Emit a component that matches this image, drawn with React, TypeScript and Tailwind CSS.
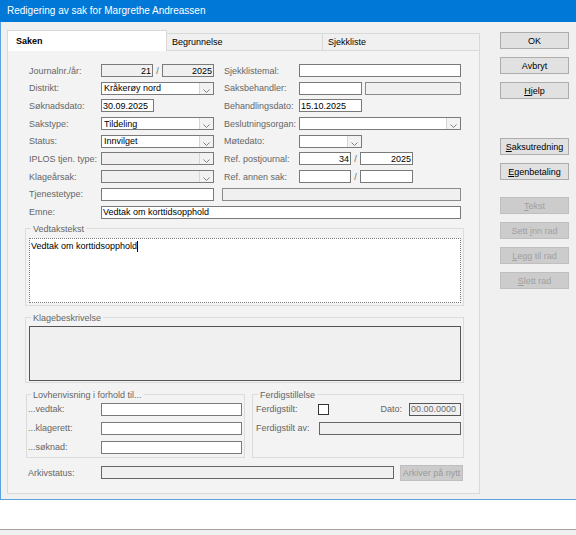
import React from 'react'

type Kind = 'white' | 'readonly' | 'disabled'

function Label({ children, className = '' }: { children: React.ReactNode; className?: string }) {
  return <span className={`text-[#666] whitespace-nowrap shrink-0 ${className}`}>{children}</span>
}

function TextBox({
  value = '',
  className = '',
  kind = 'white',
  right = false,
  muted = false,
}: {
  value?: string
  className?: string
  kind?: Kind
  right?: boolean
  muted?: boolean
}) {
  const look =
    kind === 'white'
      ? 'bg-white border-[#7a7a7a]'
      : kind === 'readonly'
        ? 'bg-[#f0f0f0] border-[#7a7a7a]'
        : 'bg-[#f0f0f0] border-[#8a8a8a]'
  return (
    <div
      className={`h-[13px] shrink-0 border ${look} flex items-center px-[1px] overflow-hidden whitespace-nowrap ${right ? 'justify-end' : ''} ${muted ? 'text-[#6d6d6d]' : 'text-black'} ${className}`}
    >
      {value}
    </div>
  )
}

function Combo({ value = '', className = '', disabled = false }: { value?: string; className?: string; disabled?: boolean }) {
  return (
    <div className={`h-[13px] shrink-0 border border-[#7a7a7a] flex ${disabled ? 'bg-[#f0f0f0]' : 'bg-white'} ${className}`}>
      <span className="flex-1 flex items-center pl-[2px] text-black whitespace-nowrap overflow-hidden">{value}</span>
      <span className="w-[14px] border-l border-[#d6d6d6] bg-[#f2f2f2] flex items-end justify-center pb-[1px]">
        <svg width="7" height="4" viewBox="0 0 7 4">
          <path d="M0.5 0.5L3.5 3.5L6.5 0.5" fill="none" stroke="#808080" strokeWidth="1" />
        </svg>
      </span>
    </div>
  )
}

function Slash() {
  return <span className="w-[9px] shrink-0 text-center text-[#666]">/</span>
}

function SideButton({ children, disabled = false }: { children: React.ReactNode; disabled?: boolean }) {
  return (
    <div
      className={`h-[17px] w-[69px] border flex items-center justify-center whitespace-nowrap ${
        disabled ? 'bg-[#cccccc] border-[#bfbfbf] text-[#a0a0a0]' : 'bg-[#e1e1e1] border-[#adadad] text-black'
      }`}
    >
      <span>{children}</span>
    </div>
  )
}

export default function App() {
  return (
    <div className="w-[576px] h-[535px] overflow-hidden flex flex-col bg-[#f0f0f0] font-['Liberation_Sans',Arial,sans-serif] text-[9px] leading-[10px]">
      <div className="h-[22px] shrink-0 bg-[#0078d7] text-white text-[10px] flex items-center pl-[7px]">
        Redigering av sak for Margrethe Andreassen
      </div>

      <div className="h-[477px] shrink-0 border-l border-[#5aa2e0] flex">
        {/* tab control */}
        <div className="ml-[6px] mt-[8px] w-[473px] flex flex-col">
          <div className="h-[20px] flex items-end">
            <div className="relative z-10 -mb-px h-[21px] w-[160px] bg-white border border-b-0 border-[#d9d9d9] flex items-center pl-[8px] font-bold text-black">
              Saken
            </div>
            <div className="h-[17px] w-[156px] border border-l-0 border-b-0 border-[#d9d9d9] bg-[#f0f0f0] flex items-center pl-[5px] text-black">
              Begrunnelse
            </div>
            <div className="h-[17px] w-[157px] border border-l-0 border-b-0 border-[#d9d9d9] bg-[#f0f0f0] flex items-center pl-[5px] text-black">
              Sjekkliste
            </div>
          </div>

          <div className="h-[444px] border border-[#d9d9d9] bg-[#f3f3f3] pt-[13px] pl-[17px] flex flex-col">
            {/* field rows */}
            <div className="pl-[4px] flex flex-col gap-[4.7px]">
              <div className="h-[13px] flex items-center">
                <div className="w-[185px] flex items-center">
                  <Label className="w-[72px]">Journalnr./år:</Label>
                  <TextBox kind="readonly" right value="21" className="w-[52px]" />
                  <Slash />
                  <TextBox kind="readonly" right value="2025" className="w-[52px]" />
                </div>
                <div className="ml-[10px] flex items-center">
                  <Label className="w-[75px]">Sjekklistemal:</Label>
                  <TextBox className="w-[162px]" />
                </div>
              </div>

              <div className="h-[13px] flex items-center">
                <div className="w-[185px] flex items-center">
                  <Label className="w-[72px]">Distrikt:</Label>
                  <Combo value="Kråkerøy nord" className="w-[113px]" />
                </div>
                <div className="ml-[10px] flex items-center">
                  <Label className="w-[75px]">Saksbehandler:</Label>
                  <TextBox className="w-[63px]" />
                  <TextBox kind="disabled" className="ml-[3px] w-[96px]" />
                </div>
              </div>

              <div className="h-[13px] flex items-center">
                <div className="w-[185px] flex items-center">
                  <Label className="w-[72px]">Søknadsdato:</Label>
                  <TextBox value="30.09.2025" className="w-[53px]" />
                </div>
                <div className="ml-[10px] flex items-center">
                  <Label className="w-[75px]">Behandlingsdato:</Label>
                  <TextBox value="15.10.2025" className="w-[63px]" />
                </div>
              </div>

              <div className="h-[13px] flex items-center">
                <div className="w-[185px] flex items-center">
                  <Label className="w-[72px]">Sakstype:</Label>
                  <Combo value="Tildeling" className="w-[113px]" />
                </div>
                <div className="ml-[10px] flex items-center">
                  <Label className="w-[75px]">Beslutningsorgan:</Label>
                  <Combo className="w-[162px]" />
                </div>
              </div>

              <div className="h-[13px] flex items-center">
                <div className="w-[185px] flex items-center">
                  <Label className="w-[72px]">Status:</Label>
                  <Combo value="Innvilget" className="w-[113px]" />
                </div>
                <div className="ml-[10px] flex items-center">
                  <Label className="w-[75px]">Møtedato:</Label>
                  <Combo className="w-[63px]" />
                </div>
              </div>

              <div className="h-[13px] flex items-center">
                <div className="w-[185px] flex items-center">
                  <Label className="w-[72px]">IPLOS tjen. type:</Label>
                  <Combo disabled className="w-[113px]" />
                </div>
                <div className="ml-[10px] flex items-center">
                  <Label className="w-[75px]">Ref. postjournal:</Label>
                  <TextBox right value="34" className="w-[52px]" />
                  <Slash />
                  <TextBox right value="2025" className="w-[53px]" />
                </div>
              </div>

              <div className="h-[13px] flex items-center">
                <div className="w-[185px] flex items-center">
                  <Label className="w-[72px]">Klageårsak:</Label>
                  <Combo disabled className="w-[113px]" />
                </div>
                <div className="ml-[10px] flex items-center">
                  <Label className="w-[75px]">Ref. annen sak:</Label>
                  <TextBox className="w-[52px]" />
                  <Slash />
                  <TextBox className="w-[53px]" />
                </div>
              </div>

              <div className="h-[13px] flex items-center">
                <div className="w-[185px] flex items-center">
                  <Label className="w-[72px]">Tjenestetype:</Label>
                  <TextBox className="w-[113px]" />
                </div>
                <TextBox kind="disabled" className="ml-[8px] w-[239px]" />
              </div>

              <div className="h-[13px] flex items-center">
                <Label className="w-[72px]">Emne:</Label>
                <TextBox value="Vedtak om korttidsopphold" className="w-[360px]" />
              </div>
            </div>

            {/* Vedtakstekst */}
            <fieldset className="mt-[5px] w-[439px] border border-[#dcdcdc] pl-[3px] pr-[2px] pt-[4px] pb-[2px]">
              <legend className="ml-[2px] px-[2px] text-[#666]">Vedtakstekst</legend>
              <div className="h-[65px] bg-white border border-dotted border-[#7a7a7a] pl-[1px] pt-[2px] text-black flex items-start">
                <span>Vedtak om korttidsopphold</span>
                <span className="inline-block w-px h-[11px] bg-black" />
              </div>
            </fieldset>

            {/* Klagebeskrivelse */}
            <fieldset className="mt-[7px] w-[439px] border border-[#dcdcdc] pl-[3px] pr-[2px] pt-[3px] pb-[1px]">
              <legend className="ml-[2px] px-[2px] text-[#666]">Klagebeskrivelse</legend>
              <div className="h-[55px] bg-[#f0f0f0] border border-[#555]" />
            </fieldset>

            {/* Lovhenvisning / Ferdigstillelse */}
            <div className="mt-[7px] flex gap-[7px] pl-[1px]">
              <fieldset className="w-[219px] border border-[#dcdcdc] pl-[1px] pr-[2px] pt-[3px] pb-[3px] flex flex-col gap-[6px]">
                <legend className="ml-[3px] px-[2px] text-[#666]">Lovhenvisning i forhold til...</legend>
                <div className="h-[13px] flex items-center">
                  <Label className="w-[73px]">...vedtak:</Label>
                  <TextBox className="w-[141px]" />
                </div>
                <div className="h-[13px] flex items-center">
                  <Label className="w-[73px]">...klagerett:</Label>
                  <TextBox className="w-[141px]" />
                </div>
                <div className="h-[13px] flex items-center">
                  <Label className="w-[73px]">...søknad:</Label>
                  <TextBox className="w-[141px]" />
                </div>
              </fieldset>

              <fieldset className="w-[212px] border border-[#dcdcdc] pl-[3px] pr-[2px] pt-[3px] pb-[3px] flex flex-col gap-[6px]">
                <legend className="ml-[2px] px-[2px] text-[#666]">Ferdigstillelse</legend>
                <div className="h-[13px] flex items-center">
                  <Label className="w-[62px]">Ferdigstilt:</Label>
                  <span className="w-[11px] h-[11px] bg-white border border-[#333]" />
                  <Label className="ml-auto">Dato:</Label>
                  <TextBox kind="readonly" muted value="00.00.0000" className="ml-[7px] w-[52px] border-[#555]" />
                </div>
                <div className="h-[13px] flex items-center">
                  <Label className="w-[63px]">Ferdigstilt av:</Label>
                  <TextBox kind="disabled" className="w-[142px] border-[#666]" />
                </div>
                <div className="h-[13px]" />
              </fieldset>
            </div>

            {/* Arkivstatus */}
            <div className="mt-[7px] h-[16px] flex items-center pl-[3px]">
              <Label className="w-[73px]">Arkivstatus:</Label>
              <TextBox kind="disabled" className="w-[293px] border-[#666]" />
              <div className="ml-[6px] h-[16px] w-[63px] bg-[#cccccc] border border-[#bfbfbf] text-[#9a9a9a] flex items-center justify-center whitespace-nowrap">
                Arkiver på nytt
              </div>
            </div>
          </div>
        </div>

        {/* side buttons */}
        <div className="ml-[20px] mt-[10px] flex flex-col">
          <div className="flex flex-col gap-[8px]">
            <SideButton>OK</SideButton>
            <SideButton>Avbryt</SideButton>
            <SideButton>
              <u>H</u>jelp
            </SideButton>
          </div>
          <div className="mt-[39px] flex flex-col gap-[8px]">
            <SideButton>
              <u>S</u>aksutredning
            </SideButton>
            <SideButton>
              <u>E</u>genbetaling
            </SideButton>
          </div>
          <div className="mt-[17px] flex flex-col gap-[8px]">
            <SideButton disabled>
              <u>T</u>ekst
            </SideButton>
            <SideButton disabled>
              Sett <u>i</u>nn rad
            </SideButton>
            <SideButton disabled>
              <u>L</u>egg til rad
            </SideButton>
            <SideButton disabled>
              <u>S</u>lett rad
            </SideButton>
          </div>
        </div>
      </div>

      <div className="h-px shrink-0 bg-[#5aa2e0]" />
      <div className="h-[29px] shrink-0 bg-white" />
      <div className="h-px shrink-0 bg-[#a0a0a0]" />
      <div className="flex-1 bg-[#f0f0f0]" />
    </div>
  )
}
